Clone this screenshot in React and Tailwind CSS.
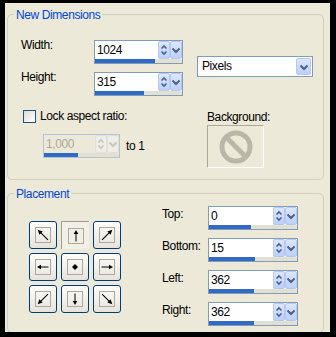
import React from 'react';

const SpinArrows = ({ disabled }) => (
  <div className={`w-[12px] h-[18px] flex items-center justify-center rounded-[2px] border ${disabled ? 'border-[#e2e0d6] bg-[#eeede6]' : 'border-[#b6c8f2] bg-linear-to-b from-[#dde7fd] to-[#bccff9]'}`}>
    <svg width="10" height="16" viewBox="0 0 10 16">
      <polyline points="2.5,6.5 5,4 7.5,6.5" fill="none" stroke={disabled ? '#c9c7ba' : '#4d6185'} strokeWidth="1.6" />
      <polyline points="2.5,9.5 5,12 7.5,9.5" fill="none" stroke={disabled ? '#c9c7ba' : '#4d6185'} strokeWidth="1.6" />
    </svg>
  </div>
);

const DropArrow = ({ disabled, className = 'w-[12px] h-[18px]' }) => (
  <div className={`${className} flex items-center justify-center rounded-[2px] border ${disabled ? 'border-[#e2e0d6] bg-[#eeede6]' : 'border-[#b6c8f2] bg-linear-to-b from-[#dde7fd] to-[#bccff9]'}`}>
    <svg width="10" height="10" viewBox="0 0 10 10">
      <polyline points="1.5,3.5 5,7 8.5,3.5" fill="none" stroke={disabled ? '#c9c7ba' : '#4d6185'} strokeWidth="2" />
    </svg>
  </div>
);

const SpinBox = ({ value, fill, widthClass, disabled }) => (
  <div className={`flex flex-col h-[24px] border ${widthClass} ${disabled ? 'border-[#b5c3d8] bg-[#ece9d8]' : 'border-[#7f9db9] bg-white'}`}>
    <div className="flex h-[18px]">
      <div className={`flex-1 pl-[2px] text-[12px] leading-[18px] tracking-[-0.4px] ${disabled ? 'text-[#aca899]' : 'text-black'}`}>
        {value}
      </div>
      <SpinArrows disabled={disabled} />
      <DropArrow disabled={disabled} />
    </div>
    <div className="h-[4px] bg-[#e3e0d2]">
      <div className="h-full bg-[#316ac5]" style={{ width: fill }} />
    </div>
  </div>
);

const Group = ({ label, className, children }) => (
  <div className={`relative w-[317px] border border-[#d0d0bf] rounded-[5px] ${className}`}>
    <span className="absolute -top-[7px] left-[6px] px-[2px] bg-[#ece9d8] text-[#0046d5] text-[12px] leading-[14px] tracking-[-0.4px]">
      {label}
    </span>
    {children}
  </div>
);

const ArrowBtn = ({ rot, pressed, center }) => {
  const diag = rot % 90 !== 0;
  return (
    <div
      className={
        pressed
          ? 'w-[28px] h-[28px] flex items-center justify-center border-t border-l border-[#a19e8e] bg-[#f1efe6]'
          : 'w-[28px] h-[28px] flex items-center justify-center rounded-[3px] border border-[#003c74] bg-linear-to-b from-[#fdfdfb] to-[#e6e4dc]'
      }
    >
      <div className="w-[16px] h-[16px] border border-[#aca899] flex items-center justify-center">
        <svg width="14" height="14" viewBox="0 0 14 14">
          {center ? (
            <path d="M7 4 L10 7 L7 10 L4 7 Z" fill="#000" />
          ) : (
            <g transform={`rotate(${rot} 7 7)`}>
              <path d={diag ? 'M7 14 V3' : 'M7 12.5 V3'} stroke="#000" strokeWidth="1" />
              <path d={diag ? 'M7 -0.5 L9.3 4.2 H4.7 Z' : 'M7 1 L9.3 5 H4.7 Z'} fill="#000" />
            </g>
          )}
        </svg>
      </div>
    </div>
  );
};

const placements = [
  { rot: -45 },
  { rot: 0, pressed: true },
  { rot: 45 },
  { rot: -90 },
  { center: true },
  { rot: 90 },
  { rot: -135 },
  { rot: 180 },
  { rot: 135 },
];

const margins = [
  { label: 'Top:', value: '0', fill: '42px' },
  { label: 'Bottom:', value: '15', fill: '46px' },
  { label: 'Left:', value: '362', fill: '45px' },
  { label: 'Right:', value: '362', fill: '45px' },
];

export default function App() {
  return (
    <div className="w-[336px] h-[337px] bg-black pt-[3px] pl-[5px] font-['Liberation_Sans',Arial,sans-serif] text-black">
      <div className="w-[325px] h-[329px] bg-[#ece9d8] overflow-hidden pl-[2px] pt-[11px]">
        <Group label="New Dimensions" className="h-[166px]">
          <div className="flex pt-[25px] pl-[13px]">
            <div className="w-[162px]">
              <div className="flex items-start">
                <span className="w-[73px] -mt-[2px] text-[12px] leading-[14px] tracking-[-0.4px]">Width:</span>
                <SpinBox value="1024" fill="60px" widthClass="w-[89px]" />
              </div>
              <div className="flex items-start mt-[8px]">
                <span className="w-[73px] -mt-[2px] text-[12px] leading-[14px] tracking-[-0.4px]">Height:</span>
                <SpinBox value="315" fill="49px" widthClass="w-[89px]" />
              </div>
              <div className="flex items-center mt-[13px] ml-[2px]">
                <div className="w-[13px] h-[13px] border border-[#1c5180] bg-linear-to-br from-[#dcdbd5] to-white" />
                <span className="ml-[4px] text-[12px] leading-[14px] tracking-[-0.4px]">Lock aspect ratio:</span>
              </div>
              <div className="flex items-center mt-[11px] ml-[22px]">
                <SpinBox value="1,000" fill="34px" widthClass="w-[77px]" disabled />
                <span className="ml-[6px] text-[12px] leading-[14px] tracking-[-0.4px]">to 1</span>
              </div>
            </div>
            <div className="ml-[14px] pt-[16px]">
              <div className="flex w-[116px] h-[21px] border border-[#7f9db9] bg-white">
                <span className="flex-1 pl-[4px] text-[12px] leading-[19px] tracking-[-0.4px]">Pixels</span>
                <div className="p-[1px]">
                  <DropArrow className="w-[15px] h-[17px]" />
                </div>
              </div>
              <div className="ml-[10px] mt-[33px] text-[12px] leading-[14px] tracking-[-0.4px]">Background:</div>
              <div className="ml-[10px] mt-[1px] w-[57px] h-[43px] border border-t-[#aca899] border-l-[#aca899] border-r-white border-b-white flex items-center justify-center">
                <svg width="36" height="36" viewBox="0 0 36 36">
                  <circle cx="18" cy="18" r="14" fill="none" stroke="#bab7a9" strokeWidth="5" />
                  <line x1="8" y1="8" x2="28" y2="28" stroke="#bab7a9" strokeWidth="5" />
                </svg>
              </div>
            </div>
          </div>
        </Group>

        <Group label="Placement" className="mt-[13px] h-[140px]">
          <div className="flex items-start pt-[12px]">
            <div className="grid grid-cols-3 gap-[4px] w-[92px] ml-[21px] mt-[15px]">
              {placements.map((p, i) => (
                <ArrowBtn key={i} {...p} />
              ))}
            </div>
            <div className="ml-[41px] flex flex-col gap-[8px]">
              {margins.map((m) => (
                <div key={m.label} className="flex items-start">
                  <span className="w-[46px] mt-[1px] text-[12px] leading-[14px] tracking-[-0.4px]">{m.label}</span>
                  <SpinBox value={m.value} fill={m.fill} widthClass="w-[90px]" />
                </div>
              ))}
            </div>
          </div>
        </Group>
      </div>
    </div>
  );
}
